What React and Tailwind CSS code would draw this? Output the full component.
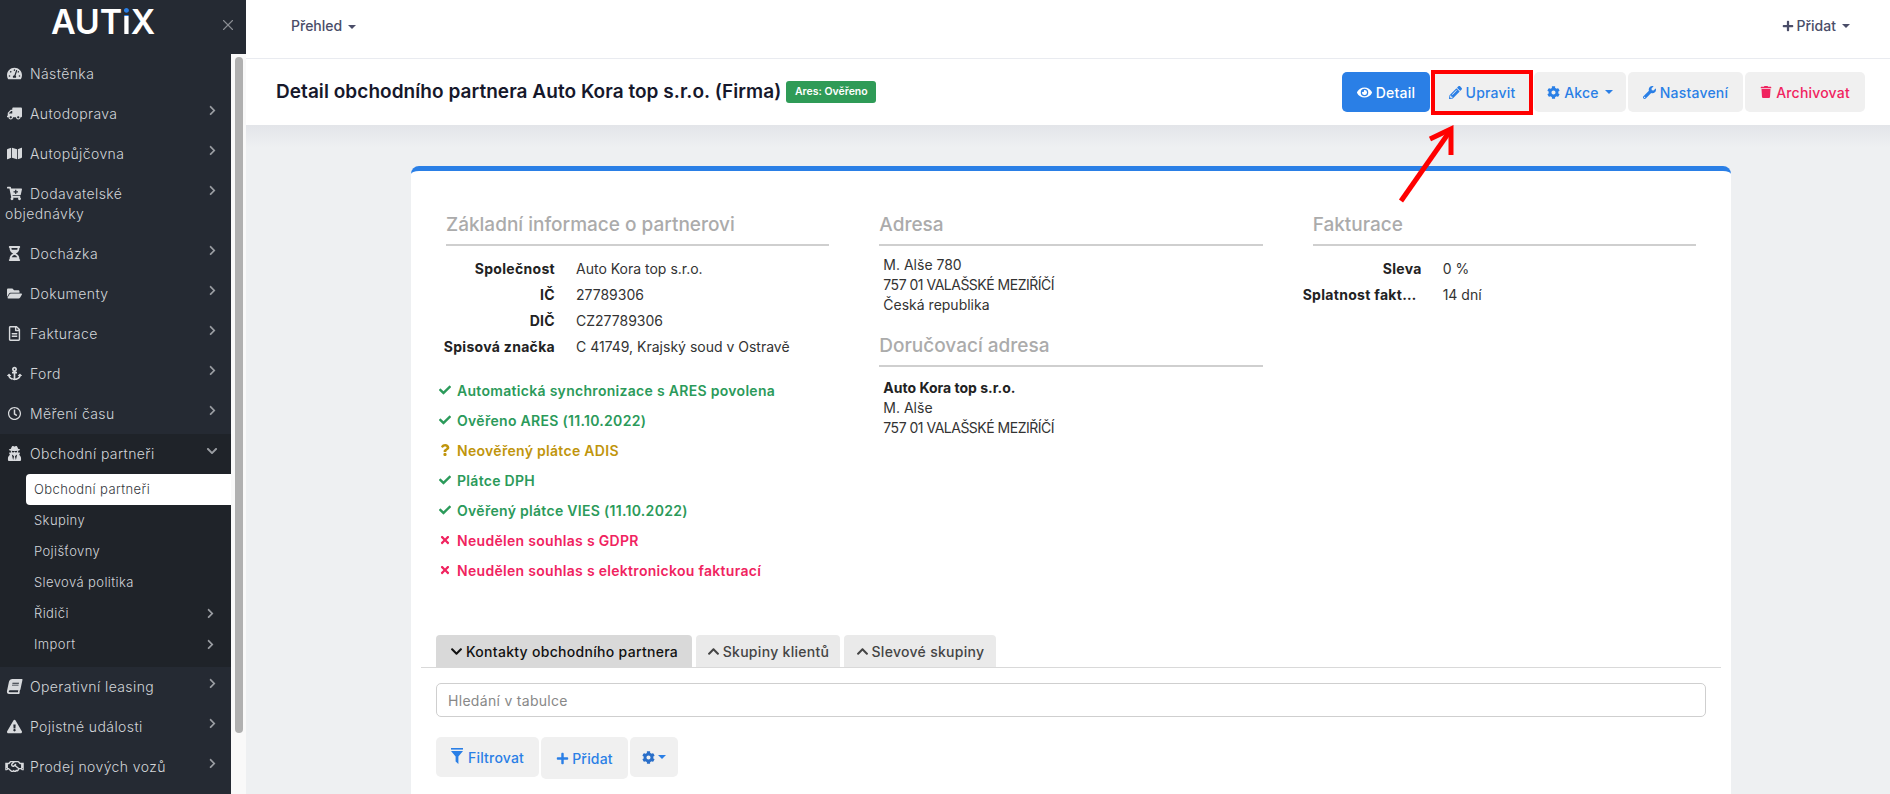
import { X } from "lucide-react";
import {
  FaAnchor,
  FaBook,
  FaCartPlus,
  FaCheck,
  FaChevronDown,
  FaChevronRight,
  FaChevronUp,
  FaCog,
  FaExclamationTriangle,
  FaEye,
  FaFolderOpen,
  FaHourglassHalf,
  FaMap,
  FaPencilAlt,
  FaPlus,
  FaQuestion,
  FaRegClock,
  FaRegFileAlt,
  FaRegHandshake,
  FaTachometerAlt,
  FaTimes,
  FaTrash,
  FaTruck,
  FaUserSecret,
  FaWrench,
} from "react-icons/fa";

const beforeGroup = [
  { icon: FaTachometerAlt, label: "Nástěnka", noArrow: true },
  { icon: FaTruck, label: "Autodoprava", iconClass: "-scale-x-100" },
  { icon: FaMap, label: "Autopůjčovna" },
  { icon: FaCartPlus, label: "Dodavatelské objednávky" },
  { icon: FaHourglassHalf, label: "Docházka" },
  { icon: FaFolderOpen, label: "Dokumenty" },
  { icon: FaRegFileAlt, label: "Fakturace" },
  { icon: FaAnchor, label: "Ford" },
  { icon: FaRegClock, label: "Měření času", iconClass: "scale-90" },
];

const afterGroup = [
  { icon: FaBook, label: "Operativní leasing", iconClass: "-skew-x-12" },
  { icon: FaExclamationTriangle, label: "Pojistné události" },
  { icon: FaRegHandshake, label: "Prodej nových vozů", iconClass: "scale-125" },
];

const subItems = [
  { label: "Obchodní partneři", active: true },
  { label: "Skupiny" },
  { label: "Pojišťovny" },
  { label: "Slevová politika" },
  { label: "Řidiči", arrow: true },
  { label: "Import", arrow: true },
];

const statuses = [
  { type: "ok", text: "Automatická synchronizace s ARES povolena" },
  { type: "ok", text: "Ověřeno ARES (11.10.2022)" },
  { type: "unknown", text: "Neověřený plátce ADIS" },
  { type: "ok", text: "Plátce DPH" },
  { type: "ok", text: "Ověřený plátce VIES (11.10.2022)" },
  { type: "bad", text: "Neudělen souhlas s GDPR" },
  { type: "bad", text: "Neudělen souhlas s elektronickou fakturací" },
];

function Caret({ className = "" }) {
  return (
    <span
      className={`ml-[6px] inline-block h-0 w-0 border-x-[4px] border-t-[4px] border-x-transparent border-t-current align-middle ${className}`}
    />
  );
}

function SideItem({ item, open }) {
  const Icon = item.icon;
  return (
    <div className="flex items-start pl-[5px] pr-[13px] pt-[10px] text-[14px] leading-[20px] font-light tracking-[0.4px] text-[#d2d5d9]">
      <p className="max-w-[190px] min-w-0 flex-1 pb-[10px]">
        <span className="mr-[7px] inline-flex w-[18px] justify-center align-[-2px] text-[15px] text-[#d8dadd]">
          <Icon className={item.iconClass} />
        </span>
        {item.label}
      </p>
      {item.noArrow ? null : open ? (
        <FaChevronDown className="ml-auto mt-[1px] h-[12px] w-[12px] text-[#9a9da2]" />
      ) : (
        <FaChevronRight className="ml-auto mt-[1px] h-[11px] w-[11px] text-[#9a9da2]" />
      )}
    </div>
  );
}

function Sidebar() {
  return (
    <aside className="flex h-full w-[246px] shrink-0 flex-col bg-[#252a33]">
      <div className="relative flex h-[54px] shrink-0">
        <span className="ml-[51px] mt-[1px] text-[34px] leading-[42px] font-semibold tracking-[-0.2px] text-white">
          AUT
          <span className="bg-[linear-gradient(#2a7fe6_36%,#ffffff_36%)] bg-clip-text text-transparent">
            i
          </span>
          X
        </span>
        <X
          className="absolute left-[219px] top-[16px] h-[18px] w-[18px] text-[#8b8e93]"
          strokeWidth={1.5}
        />
      </div>
      <div className="flex min-h-0 flex-1">
        <nav className="w-[231px] shrink-0 overflow-hidden">
          {beforeGroup.map((item) => (
            <SideItem item={item} key={item.label} />
          ))}
          <div className="bg-[#1f2329] pb-[7px]">
            <SideItem
              item={{ icon: FaUserSecret, label: "Obchodní partneři" }}
              open
            />
            <div className="pl-[26px]">
              {subItems.map((sub) => (
                <div
                  className={`flex h-[31px] items-center pl-[8px] pr-[15px] text-[13px] font-light tracking-[0.4px] ${
                    sub.active
                      ? "rounded-l-[4px] bg-white text-[#33363c]"
                      : "text-[#d2d5d9]"
                  }`}
                  key={sub.label}
                >
                  <span className="flex-1">{sub.label}</span>
                  {sub.arrow && (
                    <FaChevronRight className="h-[11px] w-[11px] text-[#9a9da2]" />
                  )}
                </div>
              ))}
            </div>
          </div>
          {afterGroup.map((item) => (
            <SideItem item={item} key={item.label} />
          ))}
        </nav>
        <div className="w-[15px] shrink-0 bg-[#f9f9f9] pl-[4px] pt-[3px]">
          <div className="h-[676px] w-[8px] rounded-[4px] bg-[#b0b0b0]" />
        </div>
      </div>
    </aside>
  );
}

function ActionButton({ children, className = "" }) {
  return (
    <button
      className={`flex h-[40px] items-center justify-center rounded-[5px] bg-[#f0f0f0] text-[14px] font-medium tracking-[0.2px] text-[#2a7fe6] ${className}`}
      type="button"
    >
      {children}
    </button>
  );
}

function Heading({ children, className = "" }) {
  return (
    <h3
      className={`h-[38px] border-b-2 border-[#cfcfcf] pt-[5px] text-[19px] leading-[24px] font-medium text-[#ababab] ${className}`}
    >
      {children}
    </h3>
  );
}

function InfoRow({ label, value }) {
  return (
    <div className="-ml-[10px] flex h-[26px] items-center text-[14px]">
      <span className="w-[119px] shrink-0 truncate text-right font-bold tracking-[0.3px] text-[#222]">
        {label}
      </span>
      <span className="ml-[21px] text-[#333]">{value}</span>
    </div>
  );
}

function StatusRow({ type, text }) {
  const color =
    type === "ok"
      ? "text-[#2b9a5a]"
      : type === "bad"
        ? "text-[#f0235f]"
        : "text-[#c0950c]";
  const Icon = type === "ok" ? FaCheck : type === "bad" ? FaTimes : FaQuestion;
  return (
    <div
      className={`-ml-[7px] flex h-[30px] items-center text-[14px] font-semibold tracking-[0.3px] ${color}`}
    >
      <span className="flex w-[18px] shrink-0 justify-center pr-[6px]">
        <Icon className="h-[12px] w-[12px]" />
      </span>
      {text}
    </div>
  );
}

function Tab({ children, icon: Icon, active, className = "" }) {
  return (
    <div
      className={`flex h-[32px] items-center justify-center rounded-t-[4px] text-[14px] font-medium tracking-[0.3px] ${
        active ? "bg-[#d9d9d9] text-[#111]" : "bg-[#eaeaea] text-[#444]"
      } ${className}`}
    >
      <Icon className="mr-[3px] h-[13px] w-[13px]" />
      {children}
    </div>
  );
}

function FunnelIcon() {
  return (
    <svg className="mr-[5px] mb-[3px] h-[16px] w-[12px]" viewBox="0 0 12 16" fill="currentColor">
      <rect x="0" y="0" width="12" height="1.6" />
      <path d="M0 3h12L7.4 8.6V16L4.6 13.6V8.6z" />
    </svg>
  );
}

function RedMarks() {
  return (
    <>
      <div className="absolute left-[1431px] top-[70px] h-[45px] w-[102px] border-4 border-[#ff0000]" />
      <svg className="absolute left-[1390px] top-[120px] h-[90px] w-[70px]" viewBox="0 0 70 90" fill="none">
        <path d="M11 81L60 11" stroke="#ff0000" strokeWidth="5" />
        <path d="M40 19L61 9L61 35" stroke="#ff0000" strokeWidth="5" />
      </svg>
    </>
  );
}

function App() {
  return (
    <div className="relative flex h-[794px] w-[1890px] overflow-hidden bg-[#eef0f2] font-['Inter',sans-serif]">
      <Sidebar />
      <main className="flex min-w-0 flex-1 flex-col">
        <header className="flex h-[59px] shrink-0 items-center justify-between border-b border-[#e9ebf0] bg-white pl-[45px] pr-[40px] pb-[7px] text-[14px] font-medium text-[#4a4d68]">
          <span>
            Přehled
            <Caret />
          </span>
          <span className="flex items-center">
            <FaPlus className="mr-[3px] h-[12px] w-[12px]" />
            Přidat
            <Caret />
          </span>
        </header>
        <div className="flex h-[66px] shrink-0 items-center justify-between bg-white pl-[30px] pr-[25px]">
          <div className="flex items-center">
            <h1 className="text-[19px] font-semibold tracking-[0.05px] text-[#16182b]">
              Detail obchodního partnera Auto Kora top s.r.o. (Firma)
            </h1>
            <span className="ml-[5px] flex h-[22px] w-[90px] items-center justify-center rounded-[3px] bg-[#2f9b57] text-[10.5px] font-semibold text-white">
              Ares: Ověřeno
            </span>
          </div>
          <div className="flex gap-[2px]">
            <ActionButton className="w-[88px] !bg-[#2a7fe6] !text-white">
              <FaEye className="mr-[4px] h-[15px] w-[15px]" />
              Detail
            </ActionButton>
            <ActionButton className="w-[100px]">
              <FaPencilAlt className="mr-[4px] h-[13px] w-[13px]" />
              Upravit
            </ActionButton>
            <ActionButton className="w-[92px]">
              <FaCog className="mr-[4px] h-[13px] w-[13px]" />
              Akce
              <Caret />
            </ActionButton>
            <ActionButton className="w-[115px]">
              <FaWrench className="mr-[4px] h-[13px] w-[13px]" />
              Nastavení
            </ActionButton>
            <ActionButton className="w-[120px] !text-[#f0235f]">
              <FaTrash className="mr-[4px] h-[12px] w-[12px]" />
              Archivovat
            </ActionButton>
          </div>
        </div>
        <div className="min-h-0 flex-1 bg-[linear-gradient(#e3e5e9,#eef0f2_22px)] pl-[165px] pt-[41px]">
          <section className="h-[640px] w-[1320px] rounded-t-[8px] border-t-[5px] border-[#2a7fe6] bg-white px-[10px]">
            <div className="grid grid-cols-3 pt-[37px]">
              <div className="px-[25px]">
                <Heading>Základní informace o partnerovi</Heading>
                <div className="mt-[9px]">
                  <InfoRow label="Společnost" value="Auto Kora top s.r.o." />
                  <InfoRow label="IČ" value="27789306" />
                  <InfoRow label="DIČ" value="CZ27789306" />
                  <InfoRow
                    label="Spisová značka"
                    value="C 41749, Krajský soud v Ostravě"
                  />
                </div>
                <div className="mt-[16px]">
                  {statuses.map((status) => (
                    <StatusRow key={status.text} {...status} />
                  ))}
                </div>
              </div>
              <div className="px-[25px]">
                <Heading>Adresa</Heading>
                <div className="mt-[9px] pl-[4px] text-[14px] leading-[20px] text-[#333]">
                  <p>M. Alše 780</p>
                  <p className="tracking-[-0.5px]">757 01 VALAŠSKÉ MEZIŘÍČÍ</p>
                  <p>Česká republika</p>
                </div>
                <Heading className="mt-[14px]">Doručovací adresa</Heading>
                <div className="mt-[11px] pl-[4px] text-[14px] leading-[20px] text-[#333]">
                  <p className="font-bold text-[#222]">Auto Kora top s.r.o.</p>
                  <p>M. Alše</p>
                  <p className="tracking-[-0.5px]">757 01 VALAŠSKÉ MEZIŘÍČÍ</p>
                </div>
              </div>
              <div className="px-[25px]">
                <Heading>Fakturace</Heading>
                <div className="mt-[9px]">
                  <InfoRow label="Sleva" value="0 %" />
                  <InfoRow label="Splatnost faktury" value="14 dní" />
                </div>
              </div>
            </div>
            <div className="mt-[50px] flex gap-[4px] border-b border-[#d9d9d9] pl-[15px]">
              <Tab active className="w-[256px]" icon={FaChevronDown}>
                Kontakty obchodního partnera
              </Tab>
              <Tab className="w-[144px]" icon={FaChevronUp}>
                Skupiny klientů
              </Tab>
              <Tab className="w-[152px]" icon={FaChevronUp}>
                Slevové skupiny
              </Tab>
            </div>
            <input
              className="ml-[15px] mt-[15px] block h-[34px] w-[1270px] rounded-[5px] border border-[#cfcfcf] px-[11px] text-[14px] tracking-[0.3px] placeholder:text-[#888]"
              placeholder="Hledání v tabulce"
              type="text"
            />
            <div className="ml-[15px] mt-[20px] flex items-start gap-[2px]">
              <ActionButton className="w-[103px]">
                <FunnelIcon />
                Filtrovat
              </ActionButton>
              <ActionButton className="!h-[42px] w-[87px]">
                <FaPlus className="mr-[3px] h-[13px] w-[13px]" />
                Přidat
              </ActionButton>
              <ActionButton className="w-[48px]">
                <FaCog className="h-[13px] w-[13px] text-[#2a6fc9]" />
                <Caret className="!ml-[3px]" />
              </ActionButton>
            </div>
          </section>
        </div>
      </main>
      <RedMarks />
    </div>
  );
}

export default App;
